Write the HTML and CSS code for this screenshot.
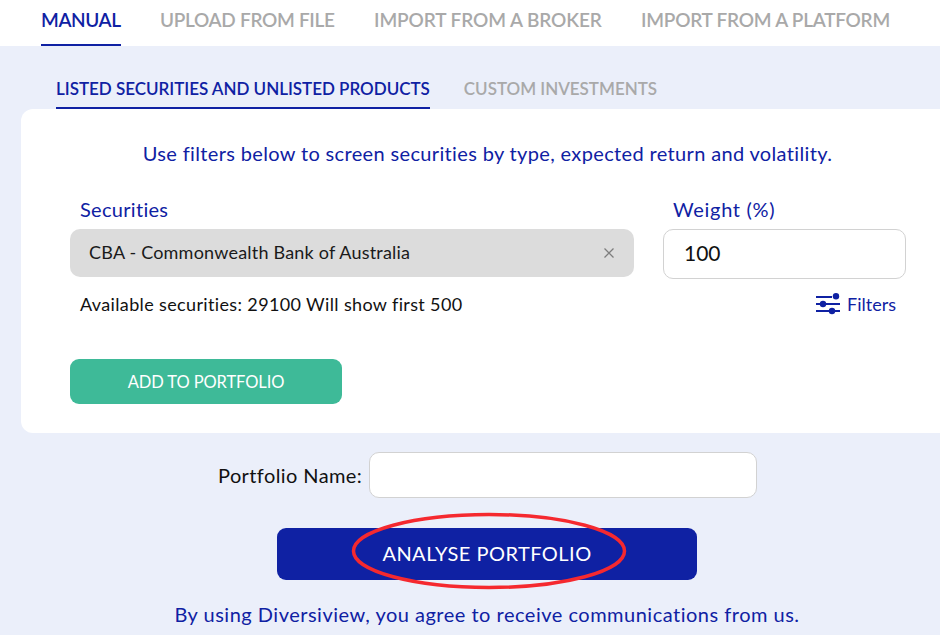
FILE: index.html
```html
<!DOCTYPE html>
<html lang="en">
<head>
<meta charset="utf-8">
<title>Portfolio</title>
<link rel="stylesheet" href="styles.css">
</head>
<body>
<div class="page">
  <nav class="tabs">
    <a class="tab tab-active t1">MANUAL</a>
    <a class="tab t2">UPLOAD FROM FILE</a>
    <a class="tab t3">IMPORT FROM A BROKER</a>
    <a class="tab t4">IMPORT FROM A PLATFORM</a>
  </nav>
  <main class="content">
    <div class="subtabs">
      <a class="subtab subtab-active">LISTED SECURITIES AND UNLISTED PRODUCTS</a>
      <a class="subtab">CUSTOM INVESTMENTS</a>
    </div>
    <section class="card">
      <p class="intro">Use filters below to screen securities by type, expected return and volatility.</p>
      <div class="form-row">
        <div class="col-sec">
          <label class="label label-sec">Securities</label>
          <div class="select">
            <span class="select-text">CBA - Commonwealth Bank of Australia</span>
            <svg class="clear" width="12" height="12" viewBox="0 0 12 12"><path d="M1.5 1.5l9 9M10.5 1.5l-9 9" stroke="#7d7d7d" stroke-width="1.3" fill="none"/></svg>
          </div>
        </div>
        <div class="col-weight">
          <label class="label label-weight">Weight (%)</label>
          <div class="input-box">100</div>
        </div>
      </div>
      <div class="meta-row">
        <span class="avail">Available securities: 29100 Will show first 500</span>
        <span class="filters">
          <svg width="24" height="22" viewBox="0 0 24 22"><g fill="#0f21a3"><rect x="0" y="3" width="16" height="2"/><circle cx="20" cy="3.2" r="3.2"/><rect x="0" y="10" width="24" height="2"/><circle cx="7" cy="11" r="3.2"/><rect x="0" y="17" width="24" height="2"/><circle cx="16" cy="18" r="3.2"/></g></svg>
          <span>Filters</span>
        </span>
      </div>
      <button class="btn-add">ADD TO PORTFOLIO</button>
    </section>
    <div class="name-row">
      <label class="name-label">Portfolio Name:</label>
      <div class="name-input"></div>
    </div>
    <div class="analyse-wrap">
      <button class="btn-analyse">ANALYSE PORTFOLIO</button>
      <svg class="circle" width="280" height="80" viewBox="0 0 280 80"><ellipse cx="140" cy="40" rx="135.5" ry="36.5" fill="none" stroke="#f5292f" stroke-width="3.5"/></svg>
    </div>
    <p class="agree">By using Diversiview, you agree to receive communications from us.</p>
  </main>
</div>
</body>
</html>
```
FILE: styles.css
```css
* { box-sizing: border-box; }
html, body { margin: 0; padding: 0; }
body { font-family: "Lato", "Open Sans", sans-serif; background: #ebeffa; color: #0f21a3; }
.page { width: 940px; height: 635px; overflow: hidden; }
.tabs { height: 46px; background: #fff; display: flex; padding-left: 41px; gap: 39px; }
.tab { height: 46px; padding-top: 7px; font-size: 19px; line-height: 26px; font-weight: 600; color: #a9a9a9; white-space: nowrap; }
.tab-active { color: #0f21a3; border-bottom: 2px solid #0f21a3; }
.t1 { width: 80px; letter-spacing: -0.4px; }
.t2 { width: 175px; letter-spacing: -0.3px; }
.t3 { width: 228px; letter-spacing: -0.1px; }
.t4 { width: 250px; letter-spacing: -0.25px; }
.content { height: 589px; }
.subtabs { display: flex; gap: 34px; padding: 31px 0 0 56px; height: 63px; }
.subtab { height: 32px; font-size: 17px; line-height: 24px; font-weight: 600; letter-spacing: -0.02px; color: #a9a9a9; white-space: nowrap; }
.subtab-active { color: #0f21a3; border-bottom: 2px solid #0f21a3; }
.card { margin-left: 21px; width: 933px; height: 324px; background: #fff; border-radius: 12px; }
.intro { margin: 0; padding-top: 31px; height: 88px; text-align: center; font-size: 20px; line-height: 26px; letter-spacing: 0.35px; }
.form-row { display: flex; gap: 29px; padding-left: 49px; }
.col-sec { width: 564px; }
.col-weight { width: 243px; }
.label { display: block; height: 32px; font-size: 20px; line-height: 24px; }
.label-sec { padding-left: 10px; letter-spacing: 0.3px; }
.label-weight { padding-left: 10px; letter-spacing: 0.7px; }
.select { height: 48px; background: #dcdcdc; border-radius: 10px; display: flex; align-items: center; justify-content: space-between; padding: 0 19px; font-size: 18px; color: #1a1a1a; }
.select-text { letter-spacing: 0.2px; margin-top: -2px; }
.input-box { height: 50px; background: #fff; border: 1px solid #d2d2d2; border-radius: 10px; padding-left: 20px; font-size: 21px; line-height: 46px; color: #111; }
.meta-row { display: flex; justify-content: space-between; align-items: center; height: 28px; margin-top: 11px; padding: 0 58px 0 59px; }
.avail { font-size: 18px; letter-spacing: 0.36px; color: #111; }
.filters { display: flex; align-items: center; gap: 7px; font-size: 18px; }
.btn-add { display: block; margin: 41px 0 0 49px; width: 272px; height: 45px; border: 0; border-radius: 9px; background: #3eba98; color: #fff; font: 400 16.5px "Lato", sans-serif; letter-spacing: -0.1px; }
.name-row { display: flex; align-items: center; height: 46px; margin-top: 19px; padding-left: 218px; gap: 7px; }
.name-label { font-size: 20px; letter-spacing: 0.4px; color: #111; width: 144px; white-space: nowrap; }
.name-input { width: 388px; height: 46px; background: #fff; border: 1px solid #d2d2d2; border-radius: 10px; }
.analyse-wrap { position: relative; width: 420px; height: 52px; margin: 30px 0 0 277px; }
.btn-analyse { width: 100%; height: 52px; border: 0; border-radius: 9px; padding-bottom: 3px; background: #0f21a3; color: #fff; font: 400 20px "Lato", sans-serif; letter-spacing: 0.47px; }
.circle { position: absolute; left: 72px; top: -17px; }
.agree { margin: 21px 0 0; padding-left: 34px; text-align: center; font-size: 20px; line-height: 26px; letter-spacing: 0.5px; }
```
